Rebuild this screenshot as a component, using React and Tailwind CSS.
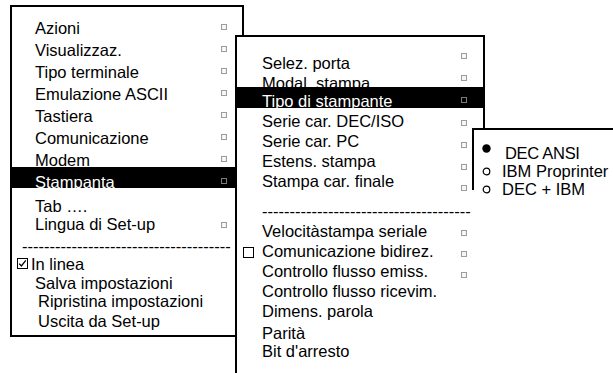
import React from 'react';

const MAIN = [
  { label: 'Azioni', h: 'h-[22px]' },
  { label: 'Visualizzaz.', h: 'h-[22px]' },
  { label: 'Tipo terminale', h: 'h-[22px]' },
  { label: 'Emulazione ASCII', h: 'h-[22px]' },
  { label: 'Tastiera', h: 'h-[22px]' },
  { label: 'Comunicazione', h: 'h-[22px]' },
  { label: 'Modem', h: 'h-[18px]' },
];

const PRINTER_TOP = [
  { label: 'Serie car. DEC/ISO', h: 'h-[20px] mt-[2px]', box: 'mt-[10px]' },
  { label: 'Serie car. PC', h: 'h-[20px]', box: 'mt-[12px]' },
  { label: 'Estens. stampa', h: 'h-[20px]', box: 'mt-[14px]' },
  { label: 'Stampa car. finale', h: 'h-[30px] pl-[23px]', box: 'mt-[15px]' },
];

const PRINTER_BOTTOM = [
  { label: 'Controllo flusso emiss.', h: 'h-[20px]', box: true },
  { label: 'Controllo flusso ricevim.', h: 'h-[20px]' },
  { label: 'Dimens. parola', h: 'h-[22px]' },
  { label: 'Parità', h: 'h-[18px]' },
  { label: "Bit d'arresto", h: 'h-[22px]' },
];

const DASHES = '--------------------------------------';

function Box({ dark, className = '' }) {
  return (
    <span
      className={`w-[6px] h-[6px] shrink-0 border ${
        dark ? 'border-[#7a7a7a] bg-black' : 'border-[#9c9c9c] bg-[#f6f6f6]'
      } ${className}`}
    />
  );
}

function Checked() {
  return (
    <svg width="11" height="11" viewBox="0 0 11 11" className="shrink-0">
      <rect x="0.5" y="0.5" width="10" height="10" fill="none" stroke="#000" />
      <path d="M2.2 5.6 L4.4 8 L8.8 2.4" fill="none" stroke="#000" strokeWidth="1.3" />
    </svg>
  );
}

function Radio({ on }) {
  return (
    <svg width="9" height="9" viewBox="0 0 9 9" className="shrink-0">
      {on ? (
        <circle cx="4.5" cy="4.5" r="4.2" fill="#000" />
      ) : (
        <circle cx="4.5" cy="4.5" r="3.3" fill="none" stroke="#000" strokeWidth="1.2" />
      )}
    </svg>
  );
}

export default function App() {
  return (
    <div className="relative w-[613px] h-[373px] bg-white overflow-hidden text-black font-['Liberation_Sans',Arial,sans-serif] text-[16.5px] leading-[22px]">
      {/* Set-up menu */}
      <div className="absolute left-[10px] top-[5px] w-[234px] h-[332px] border-2 border-black bg-white overflow-hidden pt-[10px]">
        {MAIN.map((item) => (
          <div key={item.label} className={`${item.h} flex items-start justify-between pl-[23px] pr-[15px]`}>
            <span className="whitespace-nowrap">{item.label}</span>
            <Box className="mt-[7px]" />
          </div>
        ))}
        <div className="h-[21px] bg-black overflow-hidden flex items-start justify-between pl-[23px] pr-[15px]">
          <span className="whitespace-nowrap text-white pt-[4px]">Stampanta</span>
          <Box dark className="mt-[11px]" />
        </div>
        <div className="mt-[7px] h-[18px] pl-[23px]">Tab ….</div>
        <div className="h-[22px] flex items-start justify-between pl-[23px] pr-[15px]">
          <span>Lingua di Set-up</span>
          <Box className="mt-[9px]" />
        </div>
        <div className="h-[18px] pl-[10px] whitespace-nowrap">{DASHES}</div>
        <div className="h-[19px] flex items-start gap-[3px] pl-[5px]">
          <span className="mt-[5px]"><Checked /></span>
          <span>In linea</span>
        </div>
        <div className="h-[18px] pl-[23px]">Salva impostazioni</div>
        <div className="h-[20px] pl-[26px]">Ripristina impostazioni</div>
        <div className="h-[22px] pl-[26px]">Uscita da Set-up</div>
      </div>

      {/* Stampante submenu */}
      <div className="absolute left-[235px] top-[35px] w-[250px] h-[360px] border-2 border-black bg-white overflow-hidden pt-[15px]">
        <div className="h-[20px] flex items-start justify-between pl-[25px] pr-[16px]">
          <span className="whitespace-nowrap">Selez. porta</span>
          <Box className="mt-[1px]" />
        </div>
        <div className="h-[15px] flex items-start justify-between pl-[25px] pr-[16px]">
          <span className="whitespace-nowrap">Modal. stampa</span>
          <Box className="mt-[3px]" />
        </div>
        <div className="h-[21px] bg-black overflow-hidden flex items-start justify-between pl-[25px] pr-[16px]">
          <span className="whitespace-nowrap text-white pt-[3px]">Tipo di stampante</span>
          <Box dark className="mt-[10px]" />
        </div>
        {PRINTER_TOP.map((item) => (
          <div key={item.label} className={`${item.h} flex items-start justify-between pl-[25px] pr-[16px]`}>
            <span className="whitespace-nowrap">{item.label}</span>
            <Box className={item.box} />
          </div>
        ))}
        <div className="h-[20px] pl-[25px] whitespace-nowrap">{DASHES}</div>
        <div className="h-[20px] flex items-start justify-between pl-[25px] pr-[16px]">
          <span className="whitespace-nowrap">Velocitàstampa seriale</span>
          <Box className="mt-[10px]" />
        </div>
        <div className="h-[20px] flex items-start justify-between pl-[6px] pr-[16px]">
          <span className="flex items-start whitespace-nowrap">
            <span className="mt-[7px] mr-[8px] w-[11px] h-[11px] border border-black" />
            Comunicazione bidirez.
          </span>
          <Box className="mt-[11px]" />
        </div>
        {PRINTER_BOTTOM.map((item) => (
          <div key={item.label} className={`${item.h} flex items-start justify-between pl-[25px] pr-[16px]`}>
            <span className="whitespace-nowrap">{item.label}</span>
            {item.box && <Box className="mt-[12px]" />}
          </div>
        ))}
      </div>

      {/* Tipo di stampante options */}
      <div className="absolute left-[472px] top-[128px] w-[160px] h-[260px] border-t-2 border-black bg-white">
        <div className="h-[60px] border-l-2 border-black pt-[15px] pl-[8px] leading-[17px]">
          <div className="h-[18px] flex items-start">
            <span className="-mt-[1px]"><Radio on /></span>
            <span className="ml-[14px] whitespace-nowrap tracking-[-0.3px]">DEC ANSI</span>
          </div>
          <div className="h-[18px] flex items-start">
            <span className="mt-[4px]"><Radio /></span>
            <span className="ml-[11px] whitespace-nowrap">IBM Proprinter</span>
          </div>
          <div className="h-[17px] flex items-start">
            <span className="mt-[4px]"><Radio /></span>
            <span className="ml-[11px] whitespace-nowrap">DEC + IBM</span>
          </div>
        </div>
      </div>
    </div>
  );
}
